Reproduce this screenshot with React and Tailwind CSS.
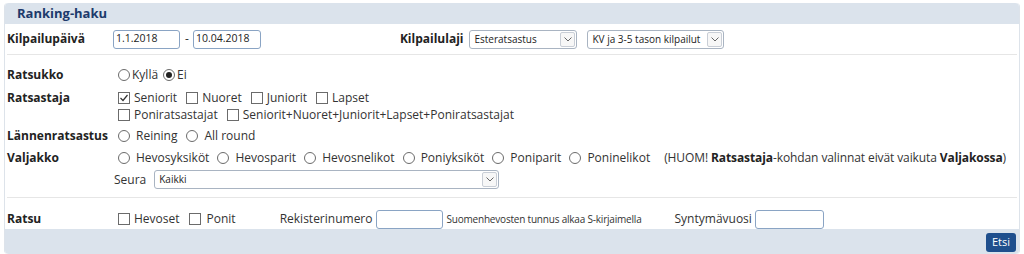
const Radio = ({ checked }) => (
  <span className="inline-flex w-[12px] h-[12px] rounded-full border border-[#6b6b6b] bg-white items-center justify-center shrink-0">
    {checked && <span className="w-[6px] h-[6px] rounded-full bg-[#222]" />}
  </span>
)

const Check = ({ checked }) => (
  <span className="inline-flex w-[12px] h-[12px] border border-[#6b6b6b] bg-white items-center justify-center shrink-0">
    {checked && (
      <svg width="10" height="10" viewBox="0 0 10 10">
        <path d="M1.5 5 L4 7.5 L8.5 2" fill="none" stroke="#333" strokeWidth="1.2" />
      </svg>
    )}
  </span>
)

const Input = ({ value, w }) => (
  <span
    className={`inline-flex items-center h-[19px] border border-[#8aa4c4] rounded-[3px] bg-white px-[2px] text-[10.5px] text-[#222] ${w}`}
  >
    {value}
  </span>
)

const Select = ({ value, w }) => (
  <span
    className={`inline-flex items-center h-[19px] border border-[#a9b4c2] rounded-[3px] bg-white text-[10px] text-[#222] ${w}`}
  >
    <span className="flex-1 pl-[4px] whitespace-nowrap overflow-hidden">{value}</span>
    <span className="w-[15px] h-[15px] mr-[1px] border border-[#c9ced6] rounded-[2px] flex items-center justify-center bg-[#f7f7f7] shrink-0">
      <svg width="8" height="5" viewBox="0 0 8 5">
        <path d="M0.5 0.5 L4 4 L7.5 0.5" fill="none" stroke="#666" strokeWidth="1" />
      </svg>
    </span>
  </span>
)

const Label = ({ children }) => (
  <span className="w-[106px] shrink-0 font-bold text-[#222]">{children}</span>
)

const Opt = ({ children, kind = 'check', checked, gap = 'gap-[4px]', mr = 'mr-[9px]' }) => (
  <span className={`inline-flex items-center whitespace-nowrap ${gap} ${mr}`}>
    {kind === 'check' ? <Check checked={checked} /> : <Radio checked={checked} />}
    <span>{children}</span>
  </span>
)

export default function App() {
  return (
    <div className="w-[1024px] h-[254px] bg-white pt-[3px] px-[4px] overflow-hidden text-[12px] text-[#333]" style={{ fontFamily: '"Open Sans", "DejaVu Sans", sans-serif' }}>
      <div className="w-[1016px] h-[251px] flex flex-col border-x border-[#dde3ea] rounded-[4px]">
        <div className="h-[21px] bg-[#dbe3ec] rounded-t-[4px] pl-[12px] flex items-center font-bold text-[13px] text-[#1d3a6b]">
          Ranking-haku
        </div>

        <div className="mx-[2px] h-[31px] border-b border-[#e6e6e6] flex items-center">
          <Label>Kilpailupäivä</Label>
          <Input value="1.1.2018" w="w-[67px]" />
          <span className="ml-[5px] mr-[4px]">-</span>
          <Input value="10.04.2018" w="w-[68px]" />
          <span className="ml-[139px] mr-[6px] font-bold text-[#222]">Kilpailulaji</span>
          <Select value="Esteratsastus" w="w-[108px]" />
          <span className="w-[10px]" />
          <Select value="KV ja 3-5 tason kilpailut" w="w-[137px]" />
        </div>

        <div className="mx-[2px] pt-[9px] pb-[7px] border-b border-[#e6e6e6] flex flex-col">
          <div className="h-[22px] flex items-center">
            <Label>Ratsukko</Label>
            <span className="w-[5px]" />
            <Opt kind="radio" gap="gap-[2px]" mr="mr-[5px]">Kyllä</Opt>
            <Opt kind="radio" checked gap="gap-[2px]">Ei</Opt>
          </div>
          <div className="mt-[3px] flex">
            <span className="h-[17px] flex items-center"><Label>Ratsastaja</Label></span>
            <span className="w-[5px]" />
            <div className="flex flex-col">
              <div className="h-[17px] flex items-center">
                <Opt checked>Seniorit</Opt>
                <Opt>Nuoret</Opt>
                <Opt>Juniorit</Opt>
                <Opt>Lapset</Opt>
              </div>
              <div className="h-[17px] flex items-center">
                <Opt>Poniratsastajat</Opt>
                <Opt>Seniorit+Nuoret+Juniorit+Lapset+Poniratsastajat</Opt>
              </div>
            </div>
          </div>
          <div className="mt-[2px] h-[22px] flex items-center">
            <Label>Lännenratsastus</Label>
            <span className="w-[5px]" />
            <Opt kind="radio" gap="gap-[6px]" mr="mr-[9px]">Reining</Opt>
            <Opt kind="radio" gap="gap-[6px]" mr="mr-[9px]">All round</Opt>
          </div>
          <div className="h-[22px] flex items-center">
            <Label>Valjakko</Label>
            <span className="w-[5px]" />
            <Opt kind="radio" gap="gap-[6px]" mr="mr-[8px]">Hevosyksiköt</Opt>
            <Opt kind="radio" gap="gap-[6px]" mr="mr-[8px]">Hevosparit</Opt>
            <Opt kind="radio" gap="gap-[6px]" mr="mr-[8px]">Hevosnelikot</Opt>
            <Opt kind="radio" gap="gap-[6px]" mr="mr-[8px]">Poniyksiköt</Opt>
            <Opt kind="radio" gap="gap-[6px]" mr="mr-[8px]">Poniparit</Opt>
            <Opt kind="radio" gap="gap-[6px]" mr="mr-[14px]">Poninelikot</Opt>
            <span className="whitespace-nowrap tracking-[-0.1px]">
              (HUOM! <b className="text-[#222]">Ratsastaja</b>-kohdan valinnat eivät vaikuta{' '}
              <b className="text-[#222]">Valjakossa</b>)
            </span>
          </div>
          <div className="h-[21px] flex items-center">
            <span className="w-[107px] shrink-0" />
            <span className="mr-[8px]">Seura</span>
            <Select value="Kaikki" w="w-[345px]" />
          </div>
        </div>

        <div className="mx-[2px] pt-[11px] h-[31px] flex items-center">
          <Label>Ratsu</Label>
          <span className="w-[5px]" />
          <Opt>Hevoset</Opt>
          <Opt kind="check" gap="gap-[6px]" mr="mr-[44px]">Ponit</Opt>
          <span className="mr-[3px]">Rekisterinumero</span>
          <Input value="" w="w-[67px]" />
          <span className="ml-[4px] text-[10px] tracking-[-0.2px] mr-[33px] whitespace-nowrap">Suomenhevosten tunnus alkaa S-kirjaimella</span>
          <span className="mr-[3px]">Syntymävuosi</span>
          <Input value="" w="w-[69px]" />
        </div>

        <div className="flex-1 bg-[#dbe3ec] rounded-b-[4px] flex items-start justify-end pt-[4px] pr-[3px]">
          <span className="h-[19px] px-[6px] bg-[#1f4f8d] rounded-[3px] text-white text-[11px] flex items-center">Etsi</span>
        </div>
      </div>
    </div>
  )
}
